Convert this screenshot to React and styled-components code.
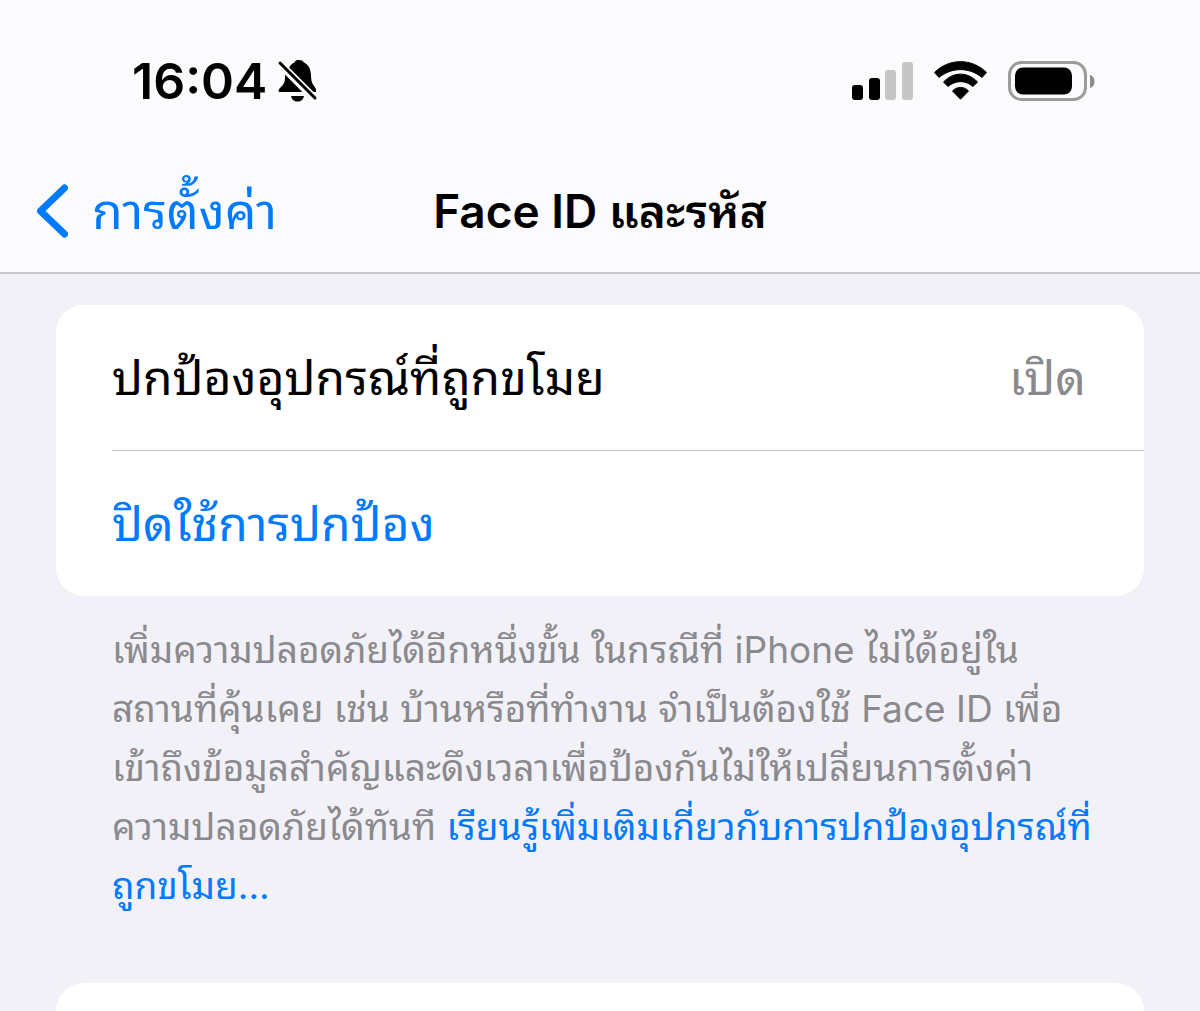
import React from "react";
import styled, { createGlobalStyle } from "styled-components";

const blue = "#007aff";
const gray = "#8a8a8e";

const GlobalStyle = createGlobalStyle`
  * { box-sizing: border-box; }
  body {
    margin: 0;
    background: #f2f1f7;
    color: #000;
    font-family: Inter, "Noto Sans Thai Looped", Thonburi, Loma, Waree, Garuda, Umpush, "Tlwg Typo", FreeSans, "Noto Sans Thai", sans-serif;
  }
`;

const Page = styled.div`
  display: flex;
  flex-direction: column;
  min-height: 100vh;
`;

const Header = styled.header`
  background: #fbfbfd;
  border-bottom: 2px solid #c7c7cb;
`;

const StatusBar = styled.div`
  display: flex;
  align-items: center;
  justify-content: space-between;
  height: 152px;
  padding: 10px 104px 0 132px;
`;

const StatusGroup = styled.div`
  display: flex;
  align-items: center;
  gap: ${(p) => p.$gap}px;
`;

const Clock = styled.time`
  font-size: 50px;
  font-weight: 600;
  line-height: 60px;
`;

const NavBar = styled.nav`
  display: grid;
  grid-template-columns: 1fr auto 1fr;
  align-items: center;
  height: 120px;
  padding: 0 36px 2px;
`;

const BackButton = styled.button`
  display: flex;
  align-items: center;
  justify-self: start;
  gap: 24px;
  border: 0;
  padding: 0;
  background: none;
  color: ${blue};
  font: inherit;
  font-size: 50px;
  line-height: 60px;
  cursor: pointer;
`;

const Title = styled.h1`
  margin: 0;
  font-size: 46px;
  font-weight: 600;
  line-height: 60px;
`;

const Content = styled.main`
  display: flex;
  flex: 1;
  flex-direction: column;
  padding: 31px 56px 0;
`;

const Card = styled.section`
  border-radius: 28px;
  background: #fff;
`;

const NextCard = styled(Card)`
  flex: 1;
  border-radius: 28px 28px 0 0;
`;

const Row = styled.div`
  display: flex;
  align-items: center;
  justify-content: space-between;
  height: ${(p) => (p.$divided ? 146 : 145)}px;
  margin-left: 56px;
  padding-right: 58px;
  border-bottom: ${(p) => (p.$divided ? "1px solid #c8c8ca" : "0")};
  font-size: 48px;
  line-height: 72px;
`;

const Value = styled.span`
  color: ${gray};
`;

const RowButton = styled.button`
  flex: 1;
  border: 0;
  padding: 0;
  background: none;
  color: ${blue};
  font: inherit;
  text-align: left;
  cursor: pointer;
`;

const Note = styled.p`
  margin: 0;
  padding: 24px 56px 68px;
  color: ${gray};
  font-size: 37px;
  line-height: 59px;
  white-space: nowrap;
`;

const Link = styled.a`
  color: ${blue};
  text-decoration: none;
`;

const MutedBell = () => (
  <svg width="42" height="44" viewBox="0 0 42 44" aria-label="Silent mode">
    <path d="M12 9C14 5 16 4 17.500 3.500C18 1.500 19.500 1 22 1C24.500 1 26 1.800 27 3.500C32 6 33.500 10 34 16C34 24 36 25 39 30V33H3C1 33 1 31 3 29C6 26 8 24 8 19V14Z" />
    <path d="M14 37H27C26 41 24 42.500 20.500 42.500S15 41 14 37Z" />
    <path d="M3 5L38 40" stroke="#fbfbfd" strokeWidth="8" strokeLinecap="round" />
    <path d="M3 4L38 39" stroke="#000" strokeWidth="3" strokeLinecap="round" />
  </svg>
);

const Signal = () => (
  <svg width="62" height="40" viewBox="0 0 62 40" aria-label="Signal strength">
    <rect x="0" y="24" width="11" height="15" rx="3" />
    <rect x="17" y="17" width="11" height="22" rx="3" />
    <rect x="33" y="9" width="11" height="30" rx="3" fill="#c6c6c7" />
    <rect x="50" y="1" width="11" height="38" rx="3" fill="#c6c6c7" />
  </svg>
);

const Wifi = () => (
  <svg width="54" height="40" viewBox="0 0 54 40" strokeWidth="1" stroke="#000" strokeLinejoin="round" aria-label="Wi-Fi">
    <path d="M.5 11.500C15-3 38-3 52.500 11.500L48 16.500C35.500 6 17.500 6 5 16.500Z" />
    <path d="M9.500 21C19.500 10.500 33.500 10.500 43.500 21L39 25.500C31.500 19 21.500 19 14 25.500Z" />
    <path d="M18.500 30C23 25.200 30 25.200 34.500 30L26.500 38.200Z" />
  </svg>
);

const Battery = () => (
  <svg width="88" height="41" viewBox="0 0 88 41" aria-label="Battery">
    <rect x="1.500" y="1.500" width="76" height="37" rx="12" fill="none" stroke="#9c9c9d" strokeWidth="3" />
    <rect x="7" y="6.500" width="57" height="27" rx="8" />
    <path d="M82 14C88 15 88 26 82 27Z" fill="#8e8e8f" />
  </svg>
);

const Chevron = () => (
  <svg width="32" height="54" viewBox="0 0 32 54" fill="none" aria-hidden="true">
    <path d="M28.500 4L4.500 27L28.500 50" stroke={blue} strokeWidth="7" strokeLinecap="round" strokeLinejoin="round" />
  </svg>
);

export default function App() {
  return (
    <Page>
      <GlobalStyle />
      <Header>
        <StatusBar>
          <StatusGroup $gap={10}>
            <Clock>16:04</Clock>
            <MutedBell />
          </StatusGroup>
          <StatusGroup $gap={20}>
            <Signal />
            <Wifi />
            <Battery />
          </StatusGroup>
        </StatusBar>
        <NavBar>
          <BackButton type="button">
            <Chevron />
            การตั้งค่า
          </BackButton>
          <Title>Face ID และรหัส</Title>
        </NavBar>
      </Header>
      <Content>
        <Card>
          <Row $divided>
            <span>ปกป้องอุปกรณ์ที่ถูกขโมย</span>
            <Value>เปิด</Value>
          </Row>
          <Row>
            <RowButton type="button">ปิดใช้การปกป้อง</RowButton>
          </Row>
        </Card>
        <Note>
          เพิ่มความปลอดภัยได้อีกหนึ่งขั้น ในกรณีที่ iPhone ไม่ได้อยู่ใน
          <br />
          สถานที่คุ้นเคย เช่น บ้านหรือที่ทำงาน จำเป็นต้องใช้ Face ID เพื่อ
          <br />
          เข้าถึงข้อมูลสำคัญและดึงเวลาเพื่อป้องกันไม่ให้เปลี่ยนการตั้งค่า
          <br />
          ความปลอดภัยได้ทันที{" "}
          <Link href="#learn-more">
            เรียนรู้เพิ่มเติมเกี่ยวกับการปกป้องอุปกรณ์ที่
            <br />
            ถูกขโมย...
          </Link>
        </Note>
        <NextCard />
      </Content>
    </Page>
  );
}
